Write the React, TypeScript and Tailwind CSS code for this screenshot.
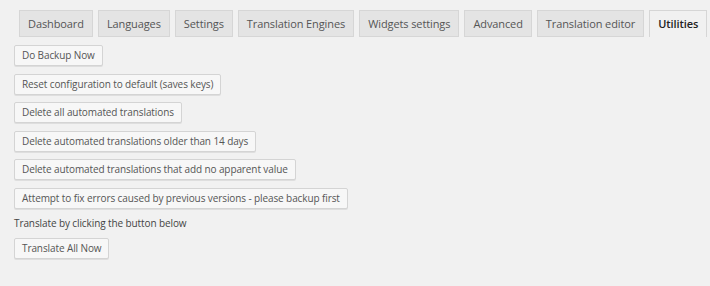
const tabs = [
  "Dashboard",
  "Languages",
  "Settings",
  "Translation Engines",
  "Widgets settings",
  "Advanced",
  "Translation editor",
  "Utilities",
];

const actions = [
  "Do Backup Now",
  "Reset configuration to default (saves keys)",
  "Delete all automated translations",
  "Delete automated translations older than 14 days",
  "Delete automated translations that add no apparent value",
  "Attempt to fix errors caused by previous versions - please backup first",
];

function Btn({ label }: { label: string }) {
  return (
    <button
      type="button"
      className="h-[21px] rounded-[2px] border border-[#d4d4d4] bg-[#f7f7f7] px-[7px] text-[10px] leading-[19px] tracking-[-0.1px] text-[#555] shadow-[0_1px_0_#dedede]"
    >
      {label}
    </button>
  );
}

export default function App() {
  const active = "Utilities";
  return (
    <div className="h-[286px] w-[710px] overflow-hidden bg-[#f1f1f1] font-['Open_Sans',sans-serif]">
      <nav className="flex gap-[5px] overflow-hidden whitespace-nowrap pl-[19px] pt-[10px]">
        {tabs.map((t) =>
          t === active ? (
            <span
              key={t}
              className="h-[27px] shrink-0 border border-b-0 border-[#d6d6d6] bg-[#f1f1f1] px-[8px] text-[11px] leading-[26px] tracking-[-0.1px] font-semibold text-[#222]"
            >
              {t}
            </span>
          ) : (
            <span
              key={t}
              className="h-[27px] shrink-0 border border-[#d6d6d6] bg-[#e4e4e4] px-[8px] text-[11px] leading-[26px] tracking-[-0.1px] text-[#555]"
            >
              {t}
            </span>
          ),
        )}
        {/* next tab, clipped by the window edge */}
        <span className="h-[27px] w-[20px] shrink-0 border border-[#d6d6d6] bg-[#e4e4e4]" />
      </nav>

      <div className="flex flex-col items-start gap-[7.5px] pl-[14px] pt-[8px]">
        {actions.map((a) => (
          <Btn key={a} label={a} />
        ))}
      </div>
      <p className="pl-[14px] pt-[6.5px] text-[10px] leading-[16px] tracking-[-0.1px] text-[#444]">
        Translate by clicking the button below
      </p>
      <div className="flex pl-[14px] pt-[7px]">
        <Btn label="Translate All Now" />
      </div>
    </div>
  );
}
